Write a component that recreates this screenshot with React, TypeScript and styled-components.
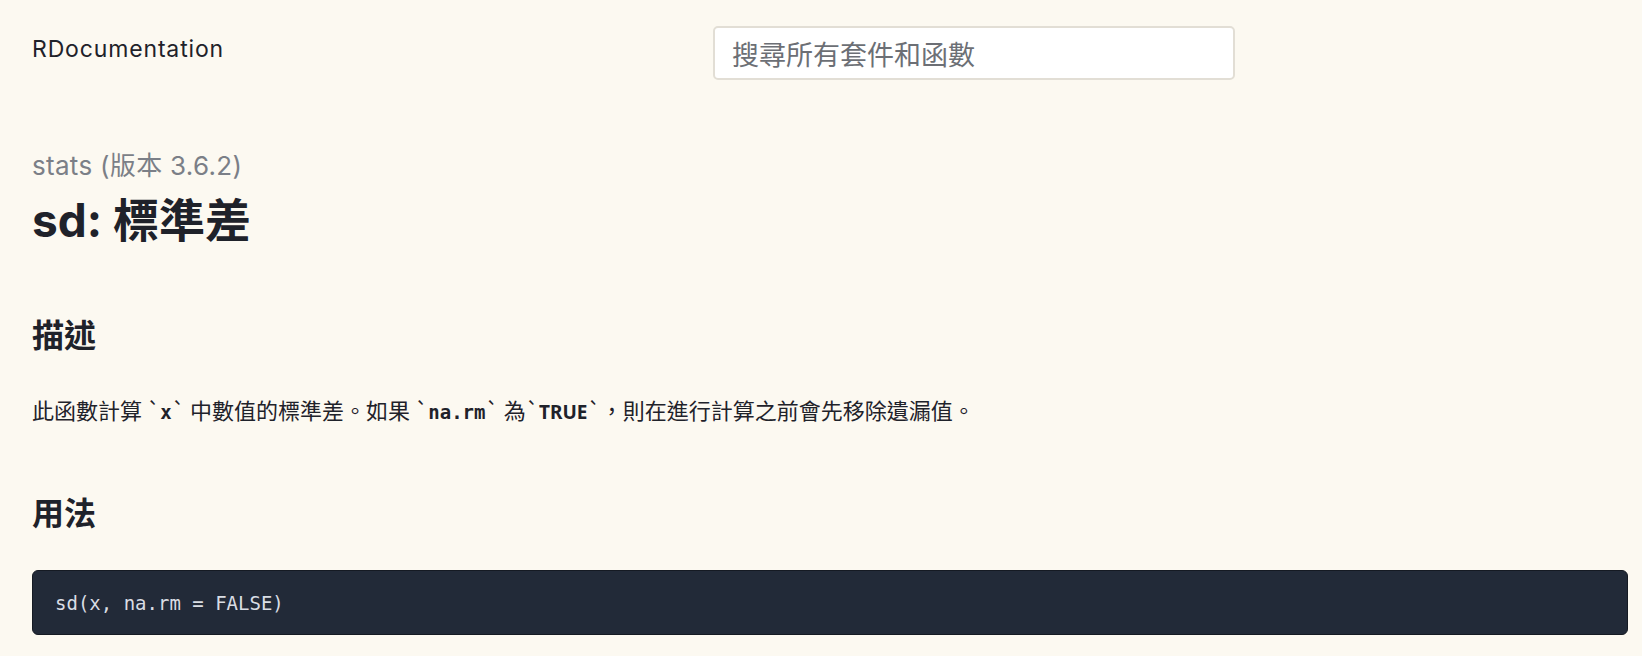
import React from "react";
import styled, { createGlobalStyle } from "styled-components";

const Global = createGlobalStyle`
  html, body { margin: 0; padding: 0; }
  body {
    background: #fcf9f1;
    font-family: Inter, "Noto Sans CJK TC", sans-serif;
    color: #1f222a;
  }
`;

const Page = styled.div`
  padding: 26px 14px 0 32px;
  min-height: 656px;
  box-sizing: border-box;
`;

const Header = styled.header`
  display: grid;
  grid-template-columns: 681px 522px;
  align-items: start;
`;

const Logo = styled.a`
  font-family: Inter, sans-serif;
  font-size: 23px;
  line-height: 30px;
  margin-top: 8px;
  color: #1f222a;
  text-decoration: none;
  letter-spacing: 0.85px;
`;

const Search = styled.input`
  box-sizing: border-box;
  width: 522px;
  height: 54px;
  border: 2px solid #e2ded5;
  border-radius: 5px;
  background: #ffffff;
  padding: 0 17px;
  font-family: "Noto Sans CJK TC", sans-serif;
  font-size: 27px;
  color: #333;
  outline: none;
  &::placeholder { color: #6c6f75; }
`;

const Main = styled.main`
  margin-top: 70px;
`;

const PackageLine = styled.div`
  font-family: Inter, "Noto Sans CJK TC", sans-serif;
  font-size: 26px;
  line-height: 32px;
  letter-spacing: 0.3px;
  color: #7b7f87;
`;

const Title = styled.h1`
  margin: 10px 0 0;
  font-family: Inter, "Noto Sans CJK TC", sans-serif;
  font-weight: 700;
  font-size: 46px;
  line-height: 56px;
  color: #1f222a;
`;

const SectionTitle = styled.h2<{ $top: number }>`
  margin: ${(p) => p.$top}px 0 0;
  font-family: "Noto Sans CJK TC", sans-serif;
  font-weight: 700;
  font-size: 32px;
  line-height: 40px;
  color: #1f222a;
`;

const Paragraph = styled.p`
  margin: 40px 0 0;
  font-family: "Noto Sans CJK TC", sans-serif;
  font-size: 22px;
  line-height: 32px;
  color: #1f222a;
`;

const InlineCode = styled.code<{ $sans?: boolean }>`
  font-family: ${(p) => (p.$sans ? `"Noto Sans", sans-serif` : `"DejaVu Sans Mono", monospace`)};
  font-weight: 700;
  font-size: 19px;
`;

const CodeBlock = styled.pre`
  margin: 39px 0 0;
  box-sizing: border-box;
  height: 65px;
  display: flex;
  align-items: center;
  padding: 0 22px;
  background: #222a38;
  border: 1px solid #151a23;
  border-radius: 6px;
  font-family: "DejaVu Sans Mono", monospace;
  font-size: 19px;
  color: #d9dde4;
`;

export default function App() {
  return (
    <>
      <Global />
      <Page>
        <Header>
          <Logo href="#">RDocumentation</Logo>
          <Search placeholder="搜尋所有套件和函數" />
        </Header>
        <Main>
          <PackageLine>stats (版本 3.6.2)</PackageLine>
          <Title>sd: 標準差</Title>
          <SectionTitle $top={65}>描述</SectionTitle>
          <Paragraph>
            此函數計算 `<InlineCode>x</InlineCode>` 中數值的標準差。如果 `
            <InlineCode>na.rm</InlineCode>` 為`<InlineCode $sans>TRUE</InlineCode>`，則在進行計算之前會先移除遺漏值。
          </Paragraph>
          <SectionTitle $top={63}>用法</SectionTitle>
          <CodeBlock>sd(x, na.rm = FALSE)</CodeBlock>
        </Main>
      </Page>
    </>
  );
}
